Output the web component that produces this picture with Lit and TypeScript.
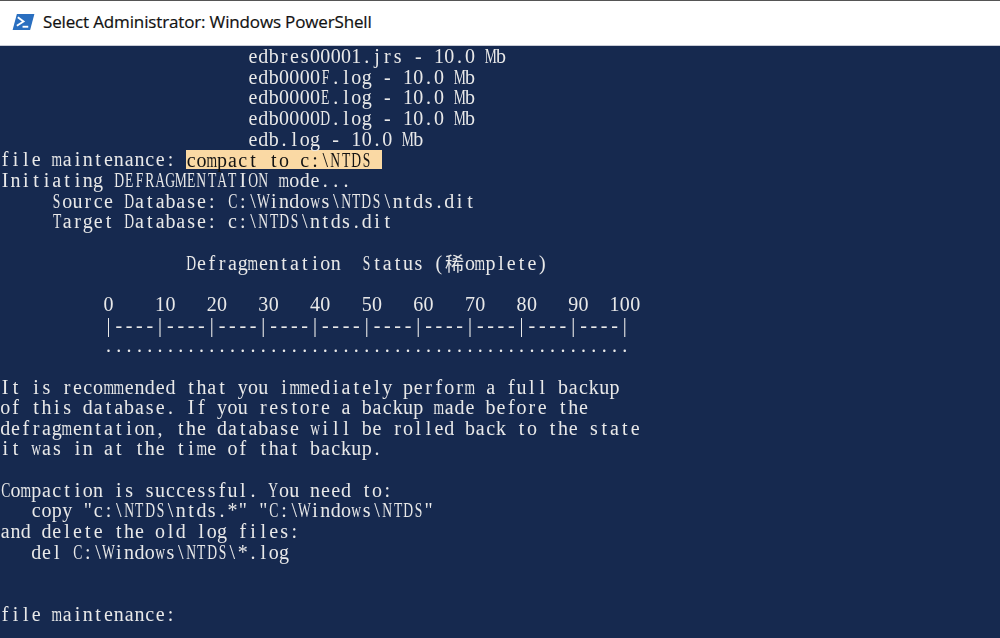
import { LitElement, html, css } from "lit";
import { customElement } from "lit/decorators.js";

const LINES: string[] = [
  "                        edbres00001.jrs - 10.0 Mb",
  "                        edb0000F.log - 10.0 Mb",
  "                        edb0000E.log - 10.0 Mb",
  "                        edb0000D.log - 10.0 Mb",
  "                        edb.log - 10.0 Mb",
  "file maintenance: ",
  "Initiating DEFRAGMENTATION mode...",
  "     Source Database: C:\\Windows\\NTDS\\ntds.dit",
  "     Target Database: c:\\NTDS\\ntds.dit",
  "",
  "                  Defragmentation  Status (稀omplete)",
  "",
  "          0    10   20   30   40   50   60   70   80   90  100",
  "          |----|----|----|----|----|----|----|----|----|----|",
  "          ...................................................",
  "",
  "It is recommended that you immediately perform a full backup",
  "of this database. If you restore a backup made before the",
  "defragmentation, the database will be rolled back to the state",
  "it was in at the time of that backup.",
  "",
  "Compaction is successful. You need to:",
  "   copy \"c:\\NTDS\\ntds.*\" \"C:\\Windows\\NTDS\"",
  "and delete the old log files:",
  "   del C:\\Windows\\NTDS\\*.log",
  "",
  "",
  "file maintenance: ",
];

const WIDE = new Set("mwMWNDGOAQHRUTEFCSBVXYKP".split(""));

@customElement("app-root")
export class AppRoot extends LitElement {
  static styles = css`
    :host { display: block; width: 1000px; height: 638px; overflow: hidden; background: #16294f; }
    .title { height: 46px; box-sizing: border-box; background: #fff; display: flex; align-items: center; gap: 8px; padding: 0 0 2px 12px; border-bottom: 1px solid #c9ccd6; border-top: 1px solid #555; font: 17px/22px "Open Sans", "Noto Sans", sans-serif; color: #111; letter-spacing: -0.15px; -webkit-text-stroke: 0.2px #111; }
    .title svg { flex: none; }
    .console { font: 20px/20.67px "Liberation Serif", serif; color: #e6e9ee; }
    .line { height: 20.67px; display: flex; }
    .c { flex: none; width: 10.33px; display: flex; justify-content: center; white-space: pre; filter: grayscale(1); }
    .c.w > span { display: inline-block; transform: scaleX(0.68); }
    .c.cjk { width: 20.66px; font: 19px/20.67px "Noto Sans CJK TC", sans-serif; }
    .hl { display: flex; background: #fad9a4; color: #12131a; height: 19px; align-self: center; }
  `;

  private chars(text: string) {
    return [...text].map((ch) => {
      const cjk = ch.charCodeAt(0) > 0x2e80;
      const cls = cjk ? "c cjk" : WIDE.has(ch) ? "c w" : "c";
      return html`<span class=${cls}><span>${ch}</span></span>`;
    });
  }

  render() {
    return html`
      <div class="title">
        <svg width="23" height="18" viewBox="0 0 24 19">
          <path d="M5 1 H23.5 L19 18 H0.5 Z" fill="#2a6fc0" />
          <path d="M6 4.5 L12 9 L5 13.5" fill="none" stroke="#fff" stroke-width="2" />
          <path d="M11 14.5 H17" stroke="#fff" stroke-width="2" />
        </svg>
        <span>Select Administrator: Windows PowerShell</span>
      </div>
      <div class="console">
        ${LINES.map(
          (l, i) => html`<div class="line">
            ${this.chars(l)}${i === 5
              ? html`<span class="hl">${this.chars("compact to c:\\NTDS ")}</span>`
              : ""}
          </div>`
        )}
      </div>
    `;
  }
}
